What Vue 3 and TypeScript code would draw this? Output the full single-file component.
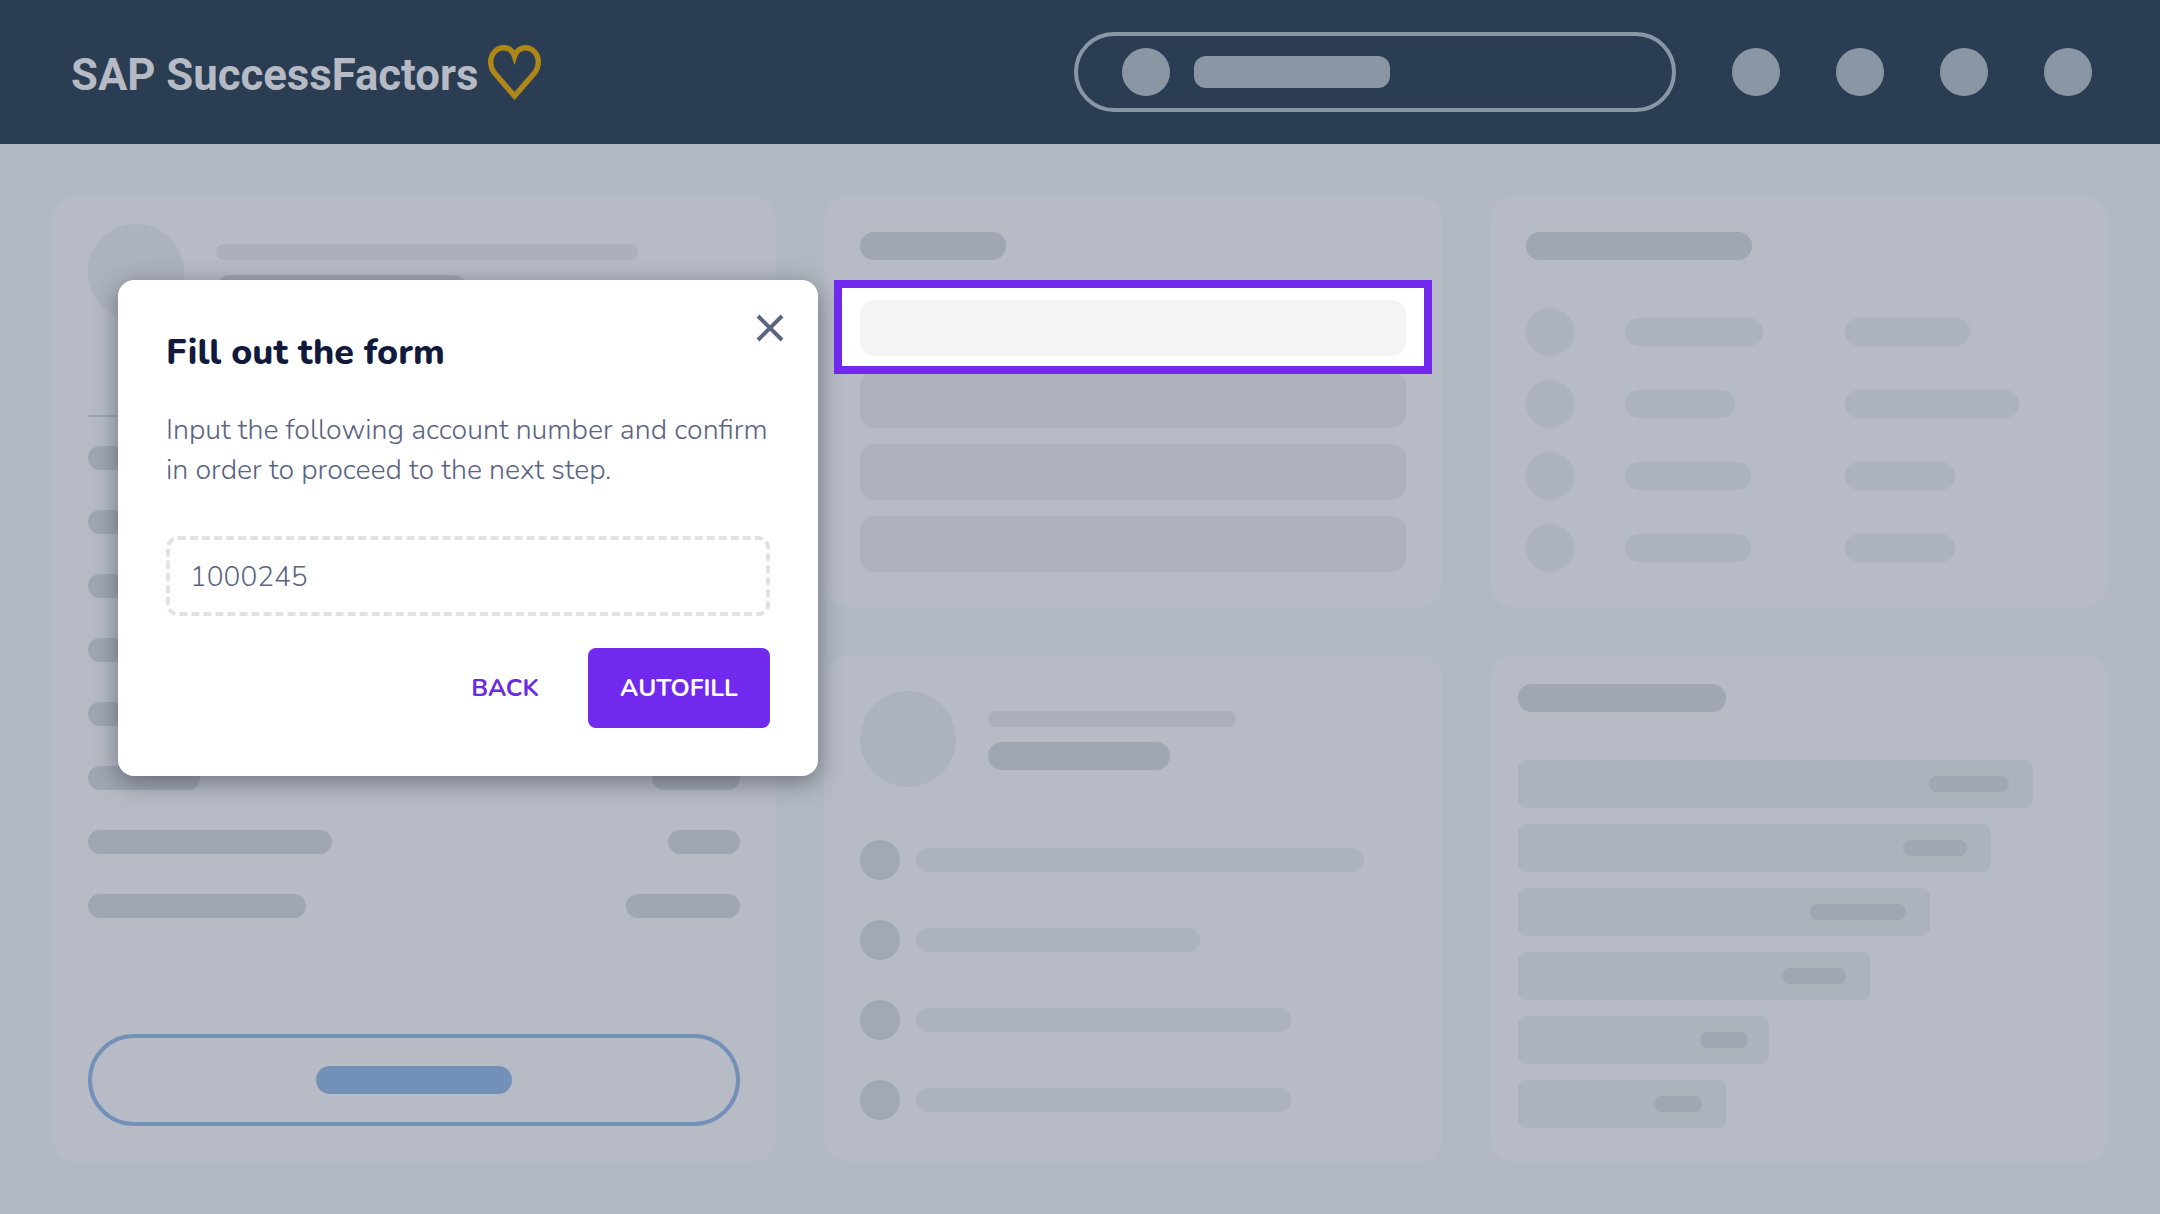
<script setup lang="ts">
const navDots = [1, 2, 3, 4];

const sideRows = [
  { left: 120, right: 88 },
  { left: 120, right: 88 },
  { left: 120, right: 88 },
  { left: 120, right: 88 },
  { left: 120, right: 88 },
  { left: 112, right: 88 },
  { left: 244, right: 72 },
  { left: 218, right: 114 },
];

const tableRows = [
  { a: 138, b: 125 },
  { a: 110, b: 174 },
  { a: 126, b: 110 },
  { a: 126, b: 110 },
];

const listRows = [448, 284, 375, 375];

const chartRows = [
  { width: 515, label: 80, inset: 24 },
  { width: 473, label: 64, inset: 24 },
  { width: 412, label: 96, inset: 24 },
  { width: 352, label: 64, inset: 24 },
  { width: 251, label: 48, inset: 21 },
  { width: 208, label: 48, inset: 24 },
];
</script>

<template>
  <div class="page">
    <header class="topbar">
      <div class="brand">
        <span class="brand__name">SAP SuccessFactors</span>
        <svg class="brand__heart" viewBox="0 0 53 55" aria-hidden="true">
          <path d="M26.500 51 6.500 28C4 25 2.700 21 2.700 16.800 2.700 8.900 8.600 2.700 15.800 2.700c4.800 0 8.800 3 10.700 8.800 1.900-5.800 5.900-8.800 10.700-8.800 7.200 0 13.100 6.200 13.100 14.100 0 4.200-1.300 8.200-3.800 11.200z" />
        </svg>
      </div>
      <div class="topbar__right">
        <div class="search">
          <span class="dot" />
          <span class="search__bar" />
        </div>
        <div class="topbar__dots">
          <span v-for="d in navDots" :key="d" class="dot" />
        </div>
      </div>
    </header>

    <main class="board">
      <section class="card card--side">
        <div class="profile">
          <span class="avatar" />
          <div class="profile__lines">
            <span class="line line--thin" style="width: 422px" />
            <span class="line line--dark" style="width: 252px" />
          </div>
        </div>
        <div class="divider" />
        <div class="side-rows">
          <div v-for="(row, i) in sideRows" :key="i" class="side-row">
            <span class="line line--dark line--mid" :style="{ width: row.left + 'px' }" />
            <span class="line line--dark line--mid" :style="{ width: row.right + 'px' }" />
          </div>
        </div>
        <div class="outline-btn"><span class="outline-btn__label" /></div>
      </section>

      <section class="card card--form">
        <span class="line line--dark card__title" style="width: 146px" />
        <div class="fields">
          <div class="spotlight"><div class="field field--active" /></div>
          <div class="field" />
          <div class="field" />
          <div class="field" />
        </div>
      </section>

      <section class="card card--table">
        <span class="line line--dark card__title" style="width: 226px" />
        <div class="table-rows">
          <div v-for="(row, i) in tableRows" :key="i" class="table-row">
            <span class="dot dot--soft" />
            <span class="table-row__cell">
              <span class="line line--soft" :style="{ width: row.a + 'px' }" />
            </span>
            <span class="line line--soft" :style="{ width: row.b + 'px' }" />
          </div>
        </div>
      </section>

      <section class="card card--list">
        <div class="profile">
          <span class="avatar" />
          <div class="profile__lines">
            <span class="line line--thin" style="width: 248px" />
            <span class="line line--dark" style="width: 182px" />
          </div>
        </div>
        <div class="list-rows">
          <div v-for="(w, i) in listRows" :key="i" class="list-row">
            <span class="bullet" />
            <span class="line line--soft line--mid" :style="{ width: w + 'px' }" />
          </div>
        </div>
      </section>

      <section class="card card--chart">
        <span class="line line--dark card__title" style="width: 208px" />
        <div class="chart-rows">
          <div
            v-for="(row, i) in chartRows"
            :key="i"
            class="chart-bar"
            :style="{ width: row.width + 'px', paddingRight: row.inset + 'px' }"
          >
            <span class="line line--dark chart-bar__label" :style="{ width: row.label + 'px' }" />
          </div>
        </div>
      </section>

      <div class="modal" role="dialog">
        <button class="modal__close" aria-label="Close">
          <svg viewBox="0 0 28 28" width="28" height="28">
            <path d="M2 2l24 24M26 2L2 26" />
          </svg>
        </button>
        <h2 class="modal__title">Fill out the form</h2>
        <p class="modal__text">
          Input the following account number and confirm<br />in order to proceed to the next step.
        </p>
        <div class="modal__input">1000245</div>
        <div class="modal__actions">
          <button class="btn btn--ghost">BACK</button>
          <button class="btn btn--primary">AUTOFILL</button>
        </div>
      </div>
    </main>
  </div>
</template>

<style scoped>
.page {
  width: 2160px;
  height: 1214px;
  display: flex;
  flex-direction: column;
  background: #b1b9c2;
  overflow: hidden;
}

.topbar {
  height: 144px;
  flex-shrink: 0;
  background: #2b3d53;
  display: flex;
  align-items: center;
  justify-content: space-between;
  padding: 0 68px 0 71px;
}

.brand {
  display: flex;
  align-items: center;
  gap: 10px;
}

.brand__name {
  margin-top: 6px;
  font-family: "Roboto", "Liberation Sans", sans-serif;
  font-size: 43.7px;
  font-weight: 700;
  color: #b5bac5;
  white-space: nowrap;
}

.brand__heart {
  width: 53px;
  height: 55px;
  fill: none;
  stroke: #ae8718;
  stroke-width: 5.4;
  stroke-miterlimit: 8;
}

.topbar__right {
  display: flex;
  align-items: center;
  gap: 56px;
}

.topbar__dots {
  display: flex;
  gap: 56px;
}

.search {
  width: 602px;
  height: 80px;
  box-sizing: border-box;
  border: 4px solid #8a97a7;
  border-radius: 40px;
  display: flex;
  align-items: center;
  gap: 24px;
  padding-left: 44px;
}

.search__bar {
  width: 196px;
  height: 32px;
  border-radius: 12px;
  background: #8a96a4;
}

.dot {
  width: 48px;
  height: 48px;
  border-radius: 50%;
  background: #8a96a4;
  flex-shrink: 0;
}

.dot--soft {
  background: #adb3bc;
}

.board {
  position: relative;
  flex: 1;
  display: grid;
  grid-template-columns: 724px 618px 618px;
  grid-template-rows: 411px 507px;
  gap: 48px;
  padding: 52px;
}

.card {
  background: #b6bbc6;
  border-radius: 24px;
  box-sizing: border-box;
  min-width: 0;
}

.card--side {
  grid-row: 1 / span 2;
  padding: 28px 36px;
  display: flex;
  flex-direction: column;
}

.card--form {
  padding: 36px;
}

.card--table {
  padding: 36px;
}

.card--list {
  grid-column: 2;
  grid-row: 2;
  padding: 36px;
}

.card--chart {
  grid-column: 3;
  grid-row: 2;
  padding: 29px 28px;
}

.line {
  display: block;
  height: 28px;
  border-radius: 14px;
}

.line--thin {
  height: 16px;
  border-radius: 8px;
  background: #abb0ba;
}

.line--dark {
  background: #a0a6b2;
}

.line--soft {
  background: #adb3bc;
}

.line--mid {
  height: 24px;
  border-radius: 12px;
}

.card__title {
  height: 28px;
}

.profile {
  display: flex;
  align-items: flex-start;
  gap: 32px;
}

.avatar {
  width: 96px;
  height: 96px;
  border-radius: 50%;
  background: #adb3bc;
  flex-shrink: 0;
}

.profile__lines {
  display: flex;
  flex-direction: column;
  gap: 15px;
  padding-top: 20px;
}

.divider {
  height: 2px;
  margin-top: 95px;
  background: #9ea4b0;
}

.side-rows {
  display: flex;
  flex-direction: column;
  gap: 40px;
  margin-top: 29px;
}

.side-row {
  display: flex;
  justify-content: space-between;
}

.outline-btn {
  height: 92px;
  margin-top: auto;
  margin-bottom: 8px;
  box-sizing: border-box;
  border: 4px solid #7390b8;
  border-radius: 46px;
  display: flex;
  align-items: center;
  justify-content: center;
}

.outline-btn__label {
  width: 196px;
  height: 28px;
  border-radius: 14px;
  background: #7390b8;
}

.fields {
  display: flex;
  flex-direction: column;
  gap: 16px;
  margin-top: 40px;
}

.field {
  height: 56px;
  border-radius: 14px;
  background: #adb2bc;
}

.field--active {
  background: #f3f4f6;
}

.spotlight {
  position: relative;
  z-index: 1;
  margin: -20px -26px -18px;
  padding: 12px 18px 10px;
  border: 8px solid #7229ee;
  background: #fff;
}

.table-rows {
  display: flex;
  flex-direction: column;
  gap: 24px;
  margin-top: 48px;
}

.table-row {
  display: flex;
  align-items: center;
}

.table-row .dot {
  margin-right: 51px;
}

.table-row__cell {
  width: 220px;
}

.list-rows {
  display: flex;
  flex-direction: column;
  gap: 40px;
  margin-top: 53px;
}

.list-row {
  display: flex;
  align-items: center;
  gap: 16px;
}

.bullet {
  width: 40px;
  height: 40px;
  border-radius: 50%;
  background: #a3a9b4;
  flex-shrink: 0;
}

.chart-rows {
  display: flex;
  flex-direction: column;
  gap: 16px;
  margin-top: 48px;
}

.chart-bar {
  height: 48px;
  border-radius: 8px;
  background: #adb3bc;
  display: flex;
  align-items: center;
  justify-content: flex-end;
  box-sizing: border-box;
}

.chart-bar__label {
  height: 16px;
  border-radius: 8px;
}

.modal {
  position: absolute;
  left: 118px;
  top: 136px;
  width: 700px;
  height: 496px;
  box-sizing: border-box;
  padding: 48px;
  background: #fff;
  border-radius: 16px;
  box-shadow: 0 6px 24px rgba(40, 45, 60, 0.5);
  font-family: "Nunito", "Open Sans", sans-serif;
}

.modal__close {
  position: absolute;
  top: 34px;
  right: 34px;
  padding: 0;
  border: 0;
  background: none;
  line-height: 0;
}

.modal__close path {
  fill: none;
  stroke: #5b6480;
  stroke-width: 4;
}

.modal__title {
  margin: 0;
  font-size: 35.8px;
  line-height: 50px;
  font-weight: 800;
  color: #111a3c;
}

.modal__text {
  margin: 32px 0 0;
  font-size: 28.5px;
  line-height: 40px;
  font-weight: 300;
  color: #5b6484;
}

.modal__input {
  margin-top: 46px;
  height: 80px;
  box-sizing: border-box;
  border: 4px dashed #e2e2e4;
  border-radius: 12px;
  padding: 2px 0 0 20px;
  display: flex;
  align-items: center;
  font-size: 28px;
  font-weight: 300;
  color: #5b6484;
}

.modal__actions {
  margin-top: 32px;
  display: flex;
  justify-content: flex-end;
  align-items: center;
  gap: 34px;
}

.btn {
  height: 80px;
  border: 0;
  border-radius: 8px;
  font-family: inherit;
  font-size: 24.5px;
  font-weight: 700;
}

.btn--ghost {
  width: 98px;
  padding: 0;
  background: none;
  color: #6c2be0;
}

.btn--primary {
  width: 182px;
  padding: 0;
  background: #7229ee;
  color: #fff;
}
</style>

<style>
html,
body {
  margin: 0;
}
</style>
